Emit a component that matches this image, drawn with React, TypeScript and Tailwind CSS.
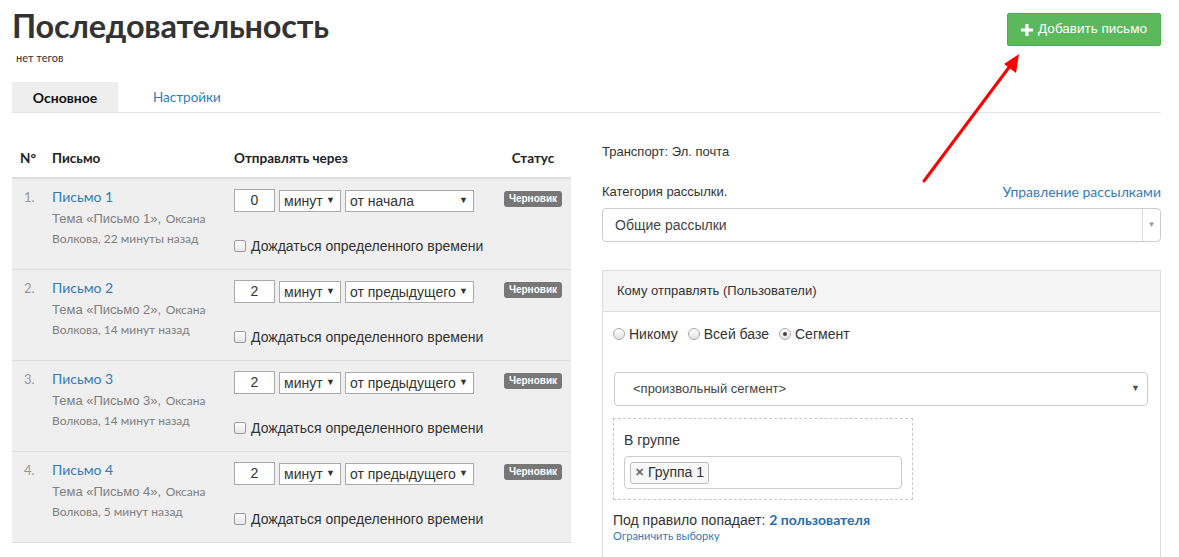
import React from "react";

const rows = [
  { n: 1, subj: "Письмо 1", ago: "22 минуты назад", val: "0", from: "от начала", w: "w-[129px]" },
  { n: 2, subj: "Письмо 2", ago: "14 минут назад", val: "2", from: "от предыдущего", w: "w-[129px]" },
  { n: 3, subj: "Письмо 3", ago: "14 минут назад", val: "2", from: "от предыдущего", w: "w-[129px]" },
  { n: 4, subj: "Письмо 4", ago: "5 минут назад", val: "2", from: "от предыдущего", w: "w-[129px]" },
];

const arial = "font-['Liberation_Sans',Arial,sans-serif]";
const prox = "font-['Lato','Liberation_Sans',sans-serif]";

function Row({ r }: { r: (typeof rows)[number] }) {
  return (
    <div className="flex h-[91px] border-b border-[#dddddd] bg-[#efefef]">
      <div className={`w-[40px] pl-[12px] pt-[10px] text-[13px] leading-[16px] text-[#999] ${prox}`}>{r.n}.</div>
      <div className="w-[182px] pt-[8px]">
        <div className={`text-[14px] leading-[20px] text-[#337ab7] ${prox}`}>Письмо {r.n}</div>
        <div className="mt-[1px] leading-[20px] text-[#808080]">
          <span className={`text-[13px] ${arial}`}>Тема «Письмо {r.n}»,</span>{" "}
          <span className={`text-[12px] ${prox}`}>Оксана</span>
        </div>
        <div className={`text-[12px] leading-[20px] text-[#808080] ${prox}`}>Волкова, {r.ago}</div>
      </div>
      <div className={`w-[261px] pt-[10px] ${arial}`}>
        <div className="flex items-start gap-[4px]">
          <div className="flex h-[23px] w-[41px] items-center justify-center border border-[#aaaaaa] bg-white text-[14px] text-[#333]">{r.val}</div>
          <div className="mt-[1px] flex h-[22px] w-[62px] items-center justify-between border border-[#aaaaaa] bg-white pl-[4px] pr-[5px] text-[14px] text-[#333]">
            <span>минут</span>
            <span className="text-[9px]">▼</span>
          </div>
          <div className={`mt-[1px] flex h-[22px] ${r.w} items-center justify-between border border-[#aaaaaa] bg-white pl-[4px] pr-[5px] text-[14px] text-[#333]`}>
            <span>{r.from}</span>
            <span className="text-[9px]">▼</span>
          </div>
        </div>
        <div className="mt-[25px] flex items-center gap-[5px] text-[14px] leading-[18px] text-[#333]">
          <span className="inline-block h-[12px] w-[12px] rounded-[2px] border border-[#9a9a9a] bg-gradient-to-b from-white to-[#e6e6e6]" />
          <span>Дождаться определенного времени</span>
        </div>
      </div>
      <div className="flex w-[76px] justify-center pt-[12px]">
        <span className={`h-[16px] rounded-[3px] bg-[#777777] px-[5px] text-[10px] font-bold leading-[16px] text-white ${arial}`}>Черновик</span>
      </div>
    </div>
  );
}

export default function App() {
  return (
    <div className={`relative min-h-[557px] w-[1179px] overflow-hidden bg-white pl-[12px] pr-[18px] text-[#333] ${arial}`}>
      {/* header */}
      <div className="flex items-start justify-between">
        <div className="pt-[7px]">
          <h1 className={`text-[32.5px] font-bold leading-[38px] tracking-[-0.2px] text-[#333] ${prox}`}>Последовательность</h1>
          <div className={`mt-[6px] pl-[4px] text-[11px] leading-[14px] text-[#333] ${prox}`}>нет тегов</div>
        </div>
        <button className={`mt-[13px] flex h-[33px] w-[154px] items-center justify-center gap-[5px] rounded-[2px] border border-[#4cae4c] bg-[#5cb85c] text-[13.5px] text-white ${arial}`}>
          <svg width="12" height="12" viewBox="0 0 12 12">
            <path d="M4.4 0h3.2v4.4H12v3.2H7.6V12H4.4V7.6H0V4.4h4.4z" fill="white" />
          </svg>
          <span>Добавить письмо</span>
        </button>
      </div>

      {/* tabs */}
      <div className="mt-[17px] flex border-b border-[#e5e5e5]">
        <div className={`flex h-[30px] w-[106px] items-center justify-center bg-[#eeeeee] text-[14px] font-bold text-[#111] ${prox}`}>Основное</div>
        <div className={`flex h-[30px] items-center pl-[35px] text-[13.5px] text-[#337ab7] ${prox}`}>Настройки</div>
      </div>

      {/* content */}
      <div className="grid grid-cols-2 gap-[31px]">
        {/* left table */}
        <div className="pt-[27px]">
          <div className={`flex h-[39px] items-center border-b-2 border-[#dddddd] text-[13.5px] font-bold text-[#222] ${prox}`}>
            <div className="w-[40px] pl-[8px]">N°</div>
            <div className="w-[182px]">Письмо</div>
            <div className="w-[261px]">Отправлять через</div>
            <div className="w-[76px] text-center">Статус</div>
          </div>
          {rows.map((r) => (
            <Row key={r.n} r={r} />
          ))}
        </div>

        {/* right column */}
        <div className="pt-[30px]">
          <div className="text-[13px] leading-[18px] text-[#333]">Транспорт: Эл. почта</div>
          <div className="mt-[22px] flex items-center justify-between text-[13px] leading-[18px]">
            <span className="text-[#333]">Категория рассылки.</span>
            <span className={`text-[14px] text-[#337ab7] ${prox}`}>Управление рассылками</span>
          </div>
          <div className="mt-[7px] flex h-[34px] items-stretch rounded-[4px] border border-[#cccccc] bg-white">
            <div className="flex flex-1 items-center pl-[12px] text-[14px] text-[#444]">Общие рассылки</div>
            <div className="flex w-[18px] items-center justify-center border-l border-[#dddddd] text-[8px] text-[#999]">▼</div>
          </div>

          <div className="mt-[28px] border border-[#dddddd]">
            <div className="flex h-[41px] items-center border-b border-[#dddddd] bg-[#f5f5f5] pl-[14px] text-[13px] text-[#333]">
              Кому отправлять (Пользователи)
            </div>
            <div className="pb-[16px] pl-[10px] pr-[12px]">
              <div className="mt-[13px] flex items-center text-[14px] leading-[18px] text-[#333]">
                <span className="mr-[4px] inline-block h-[12px] w-[12px] rounded-full border border-[#aaaaaa] bg-gradient-to-b from-white to-[#e3e3e3]" />
                <span className="mr-[10px]">Никому</span>
                <span className="mr-[4px] inline-block h-[12px] w-[12px] rounded-full border border-[#aaaaaa] bg-gradient-to-b from-white to-[#e3e3e3]" />
                <span className="mr-[10px]">Всей базе</span>
                <span className="mr-[4px] flex h-[12px] w-[12px] items-center justify-center rounded-full border border-[#aaaaaa] bg-gradient-to-b from-white to-[#e3e3e3]">
                  <span className="h-[4px] w-[4px] rounded-full bg-[#444]" />
                </span>
                <span>Сегмент</span>
              </div>
              <div className="ml-[1px] mt-[29px] flex h-[34px] items-center justify-between rounded-[4px] border border-[#cccccc] bg-white pl-[18px] pr-[7px] text-[13px] text-[#444]">
                <span>&lt;произвольный сегмент&gt;</span>
                <span className="text-[9px] text-[#555]">▼</span>
              </div>
              <div className="mt-[12px] w-[300px] border border-dashed border-[#c8c8c8] px-[10px] pb-[10px] pt-[12px]">
                <div className="text-[14px] leading-[18px] text-[#333]">В группе</div>
                <div className="mt-[7px] flex h-[33px] items-center rounded-[4px] border border-[#cccccc] bg-white pl-[5px]">
                  <span className="flex h-[22px] items-center gap-[4px] rounded-[3px] border border-[#bbbbbb] bg-[#f8f8f8] px-[4px] text-[14px] text-[#333]">
                    <span className="text-[11px] font-bold text-[#666]">✕</span>
                    Группа 1
                  </span>
                </div>
              </div>
              <div className="mt-[11px] text-[14px] leading-[18px] text-[#333]">
                Под правило попадает: <span className={`font-bold text-[#1f6fb2] ${prox}`}>2 пользователя</span>
              </div>
              <div className={`text-[11px] leading-[14px] text-[#337ab7] ${prox}`}>Ограничить выборку</div>
            </div>
          </div>
        </div>
      </div>

      {/* annotation arrow */}
      <svg className="pointer-events-none absolute left-0 top-0" width="1179" height="557" viewBox="0 0 1179 557">
        <line x1="924" y1="181" x2="1010" y2="66" stroke="#ff0000" strokeWidth="3" strokeLinecap="round" />
        <polygon points="1019,54 1016,73 1004,64" fill="#ff0000" />
      </svg>
    </div>
  );
}
